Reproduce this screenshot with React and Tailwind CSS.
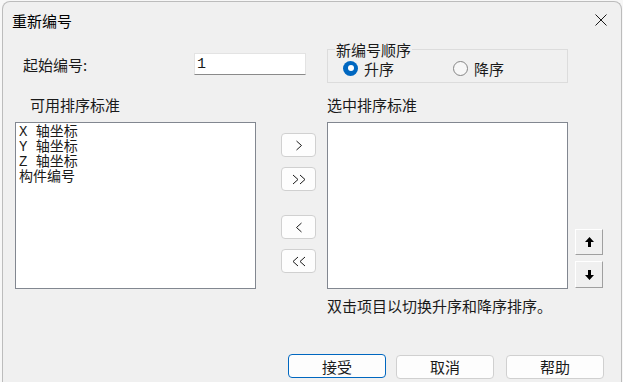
import React from 'react';

const FONT = { fontFamily: '"Noto Sans CJK SC", "Noto Sans", sans-serif' };
const LIST_FONT = { fontFamily: '"Liberation Mono", "Noto Sans CJK SC", monospace' };

const Chevron = ({ dir = 'right', double = false }) => {
  const one = (x) =>
    dir === 'right'
      ? `M${x} 1 L${x + 5} 5.5 L${x} 10`
      : `M${x + 5} 1 L${x} 5.5 L${x + 5} 10`;
  return (
    <svg width={double ? 14 : 8} height="11" viewBox={`0 0 ${double ? 14 : 8} 11`} fill="none">
      <path d={double ? `${one(1)} ${one(8)}` : one(1.5)} stroke="#1a1a1a" strokeWidth="1" />
    </svg>
  );
};

const ArrowIcon = ({ up }) => (
  <svg width="9" height="10" viewBox="0 0 9 10">
    {up ? (
      <path d="M4.5 0 L9 5 L6 5 L6 10 L3 10 L3 5 L0 5 Z" fill="#000" />
    ) : (
      <path d="M3 0 L6 0 L6 5 L9 5 L4.5 10 L0 5 L3 5 Z" fill="#000" />
    )}
  </svg>
);

const MoveButton = ({ children, className = '' }) => (
  <button className={`w-[35px] h-[24px] flex items-center justify-center rounded-[4px] border border-[#d0d0d0] bg-[#fdfdfd] ${className}`}>
    {children}
  </button>
);

const Radio = ({ checked, label }) => (
  <div className="flex items-center gap-[6px]">
    {checked ? (
      <div className="w-[15px] h-[15px] rounded-full bg-[#0067c0] flex items-center justify-center">
        <div className="w-[6px] h-[6px] rounded-full bg-white" />
      </div>
    ) : (
      <div className="w-[15px] h-[15px] rounded-full border border-[#858585] bg-[#f7f7f7]" />
    )}
    <span className="text-[15px] leading-[15px] text-[#1a1a1a]">{label}</span>
  </div>
);

const DialogButton = ({ children, primary }) => (
  <button
    className={`w-[98px] h-[24px] rounded-[4px] border bg-[#fdfdfd] text-[15px] leading-[15px] text-[#1a1a1a] ${
      primary ? 'border-[#0067c0]' : 'border-[#d0d0d0]'
    }`}
  >
    {children}
  </button>
);

export default function App() {
  const items = ['X 轴坐标', 'Y 轴坐标', 'Z 轴坐标', '构件编号'];

  return (
    <div className="w-[623px] h-[382px] bg-[#f7f7f7] overflow-hidden" style={FONT}>
      <div className="ml-[2px] mt-[1px] w-[620px] h-[381px] bg-[#f0f0f0] border border-b-0 border-[#bcbcbc] rounded-t-[8px] flex flex-col">
        {/* Title bar */}
        <div className="h-[36px] flex items-center justify-between pl-[9px] pr-[14px]">
          <span className="text-[15px] leading-[15px] text-black">重新编号</span>
          <svg width="12" height="12" viewBox="0 0 12 12">
            <path d="M0.5 0.5 L11.5 11.5 M11.5 0.5 L0.5 11.5" stroke="#1a1a1a" strokeWidth="1" />
          </svg>
        </div>

        <div className="flex flex-col pl-[12px] text-[#1a1a1a]">
          {/* Row 1 */}
          <div className="flex mt-[4px]">
            <div className="w-[312px] flex items-center h-[22px] mt-[11px]">
              <span className="ml-[8px] w-[171px] text-[15px] leading-[15px]">起始编号:</span>
              <div className="w-[112px] h-[22px] bg-white border border-[#e3e3e3] border-b-[#8a8a8a] flex items-center pl-[2px]">
                <span className="text-[15px] leading-[15px]" style={LIST_FONT}>1</span>
              </div>
            </div>
            <fieldset className="w-[241px] border border-[#dcdcdc] pl-[7px] pb-[3px]">
              <legend className="px-[1px] text-[15px] leading-[15px]">新编号顺序</legend>
              <div className="flex items-center h-[22px] pl-[8px]">
                <div className="w-[110px]">
                  <Radio checked label="升序" />
                </div>
                <Radio label="降序" />
              </div>
            </fieldset>
          </div>

          {/* Row 2: labels */}
          <div className="flex mt-[14px] text-[15px] leading-[15px]">
            <span className="w-[312px] pl-[15px]">可用排序标准</span>
            <span>选中排序标准</span>
          </div>

          {/* Row 3: lists */}
          <div className="flex mt-[10px]">
            <div className="w-[241px] h-[167px] bg-white border border-[#828790] pt-[2px] pl-[3px] text-[14px] leading-[15px]" style={LIST_FONT}>
              {items.map((it) => (
                <div key={it} className="whitespace-pre h-[15px]">{it}</div>
              ))}
            </div>
            <div className="ml-[25px] w-[35px] flex flex-col">
              <MoveButton className="mt-[11px]"><Chevron dir="right" /></MoveButton>
              <MoveButton className="mt-[10px]"><Chevron dir="right" double /></MoveButton>
              <MoveButton className="mt-[24px]"><Chevron dir="left" /></MoveButton>
              <MoveButton className="mt-[10px]"><Chevron dir="left" double /></MoveButton>
            </div>
            <div className="ml-[11px] w-[241px] h-[167px] bg-white border border-[#828790]" />
            <div className="ml-[7px] flex flex-col justify-end gap-[6px] pb-[1px]">
              <button className="w-[28px] h-[26px] flex items-center justify-center bg-[#f0f0f0] border border-t-white border-l-white border-r-[#a0a0a0] border-b-[#a0a0a0]">
                <ArrowIcon up />
              </button>
              <button className="w-[28px] h-[27px] flex items-center justify-center bg-[#f0f0f0] border border-t-white border-l-white border-r-[#a0a0a0] border-b-[#a0a0a0]">
                <ArrowIcon />
              </button>
            </div>
          </div>

          {/* Row 4: hint */}
          <div className="mt-[9px] ml-[312px] text-[15px] leading-[15px]">双击项目以切换升序和降序排序。</div>

          {/* Row 5: buttons */}
          <div className="flex mt-[41px] ml-[273px]">
            <DialogButton primary>接受</DialogButton>
            <div className="ml-[10px]"><DialogButton>取消</DialogButton></div>
            <div className="ml-[12px]"><DialogButton>帮助</DialogButton></div>
          </div>
        </div>
      </div>
    </div>
  );
}
